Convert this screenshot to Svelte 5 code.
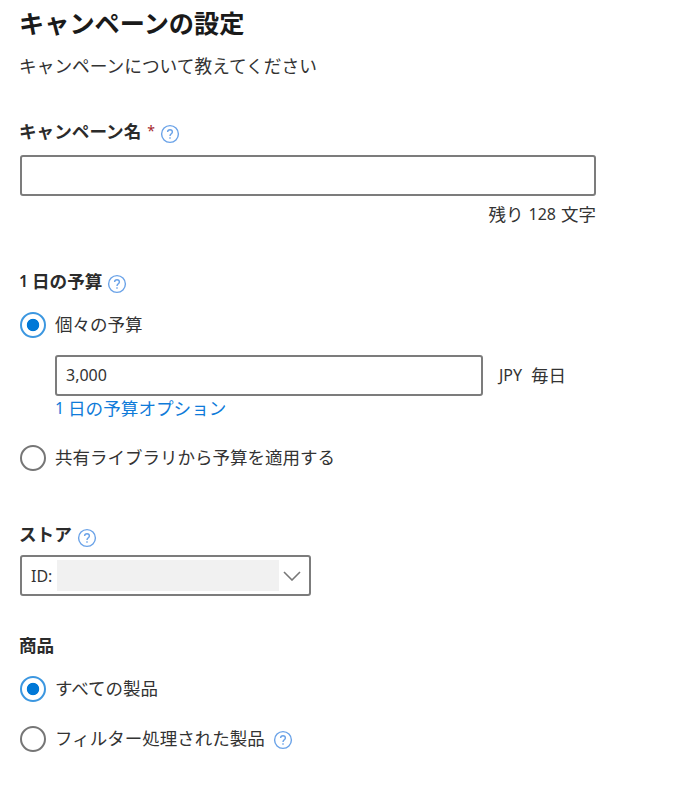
<script>
    let name = "";
    let amount = "3,000";
    let budget = "individual";
    let products = "all";

    // The counter below the name field goes down while typing
    const maxLength = 128;
    $: remaining = maxLength - name.length;
</script>

{#snippet help()}
    <svg class="help" viewBox="0 0 20 20" aria-hidden="true">
        <circle cx="10" cy="10" r="8.4" />
        <path d="M7.6 8.1C7.6 6.5 8.5 5.7 10 5.7s2.4.9 2.4 2.2c0 1.8-2.4 2-2.4 4.1" />
        <path d="M10 13.2v1.5" />
    </svg>
{/snippet}

<main>
    <h1>キャンペーンの設定</h1>
    <p class="intro">キャンペーンについて教えてください</p>

    <section class="name">
        <h2><span>キャンペーン名</span><span class="required">*</span>{@render help()}</h2>
        <input class="field" type="text" maxlength={maxLength} aria-label="キャンペーン名" bind:value={name}>
        <p class="counter"><span>残り</span><span class="latin">{remaining}</span><span>文字</span></p>
    </section>

    <section class="budget">
        <h2><span class="latin one">1</span><span>日の予算</span>{@render help()}</h2>
        <label><input type="radio" value="individual" bind:group={budget}><span>個々の予算</span></label>
        <div class="amount">
            <input class="field latin" type="text" aria-label="1 日の予算" bind:value={amount}>
            <span class="latin currency">JPY</span>
            <span>毎日</span>
        </div>
        <a href="#options"><span class="latin one">1</span><span>日の予算オプション</span></a>
        <label><input type="radio" value="shared" bind:group={budget}><span>共有ライブラリから予算を適用する</span></label>
    </section>

    <section class="store">
        <h2><span>ストア</span>{@render help()}</h2>
        <button type="button" class="field select">
            <span class="latin">ID:</span>
            <span class="blank"></span>
            <svg class="chevron" viewBox="0 0 18 10" aria-hidden="true"><path d="M1 1l8 8 8-8" /></svg>
        </button>
    </section>

    <section class="products">
        <h2>商品</h2>
        <label><input type="radio" value="all" bind:group={products}><span>すべての製品</span></label>
        <label><input type="radio" value="filtered" bind:group={products}><span>フィルター処理された製品</span>{@render help()}</label>
    </section>
</main>

<style>
    :global(body) {
        background: #fff;
    }

    main {
        box-sizing: border-box;
        width: 596px;
        height: 807px;
        padding-left: 20px;
        font-family: "Noto Sans CJK JP", "Noto Sans", sans-serif;
        font-size: 17.5px;
        line-height: 28px;
        color: #333;
        white-space: nowrap;
    }

    h1, h2, p {
        margin: 0;
    }

    h1 {
        padding-top: 2px;
        margin-left: -1px;
        font-size: 25.2px;
        font-weight: 700;
        line-height: 40px;
        color: #1a1a1a;
    }

    h2 {
        display: flex;
        align-items: center;
        height: 28px;
        margin-left: -1px;
        font-size: 17.6px;
        font-weight: 700;
        color: #2b2b2b;
    }

    h2 > span {
        margin-bottom: 2px;
    }

    .intro {
        margin-top: 9px;
        margin-left: -1px;
        font-size: 17.7px;
    }

    .latin {
        font-family: "Noto Sans", sans-serif;
        font-size: 16px;
    }

    .one {
        width: 13px;
    }

    h2 .one {
        font-weight: 600;
    }

    .required {
        margin-left: 6px;
        font-family: "Noto Sans", sans-serif;
        font-size: 14px;
        font-weight: 400;
        color: #a4262c;
    }

    .help {
        width: 20px;
        height: 20px;
        margin-left: 5px;
        position: relative;
        top: 2px;
        fill: none;
        stroke: #6ba3e8;
        stroke-width: 1.4;
    }

    .field {
        box-sizing: border-box;
        display: block;
        width: 100%;
        height: 41px;
        margin: 0;
        padding: 0 9px 1px;
        border: 2px solid #7c7c7c;
        border-radius: 3px;
        background: #fff;
        color: #333;
    }

    .field:focus {
        outline: 1px solid #0078d4;
    }

    .name {
        margin-top: 39px;
    }

    .name .field {
        margin-top: 9px;
    }

    .counter {
        display: flex;
        justify-content: flex-end;
        gap: 5px;
        margin-top: 4px;
    }

    .budget {
        margin-top: 40px;
    }

    label {
        display: flex;
        align-items: center;
        height: 28px;
        cursor: pointer;
    }

    label span {
        margin-bottom: 3px;
    }

    input[type="radio"] {
        box-sizing: border-box;
        appearance: none;
        width: 26px;
        height: 26px;
        margin: 0 9px 0 0;
        border: 2px solid #767676;
        border-radius: 50%;
        cursor: pointer;
    }

    input[type="radio"]:checked {
        border-color: #3c97e0;
        background: radial-gradient(circle, #0078d7 5.8px, transparent 6.6px);
    }

    .budget label {
        margin-top: 15px;
    }

    .amount {
        display: flex;
        align-items: center;
        margin: 16px 0 0 35px;
    }

    .amount .field {
        width: 428px;
    }

    .amount span {
        margin-bottom: 2px;
    }

    .amount .currency {
        margin-left: 16px;
        margin-right: 9px;
    }

    a {
        display: flex;
        width: max-content;
        height: 26px;
        margin-left: 35px;
        font-size: 17.6px;
        line-height: 24px;
        color: #0f7bd9;
        text-decoration: none;
    }

    .budget a + label {
        margin-top: 22px;
    }

    .store {
        margin-top: 49px;
    }

    .store .help {
        top: 3px;
    }

    .select {
        display: flex;
        align-items: center;
        width: 291px;
        margin-top: 6px;
        padding: 0 8px 0 9px;
        cursor: pointer;
    }

    .blank {
        flex: none;
        width: 222px;
        height: 31px;
        margin-left: 5px;
        background: #f1f1f1;
    }

    .chevron {
        width: 18px;
        height: 10px;
        margin-left: auto;
        fill: none;
        stroke: #777;
        stroke-width: 1.6;
    }

    .products {
        margin-top: 35px;
    }

    .products label {
        margin-top: 16px;
    }

    .products label + label {
        margin-top: 22px;
    }

    .products .help {
        top: 1px;
        margin-left: 8px;
    }
</style>
